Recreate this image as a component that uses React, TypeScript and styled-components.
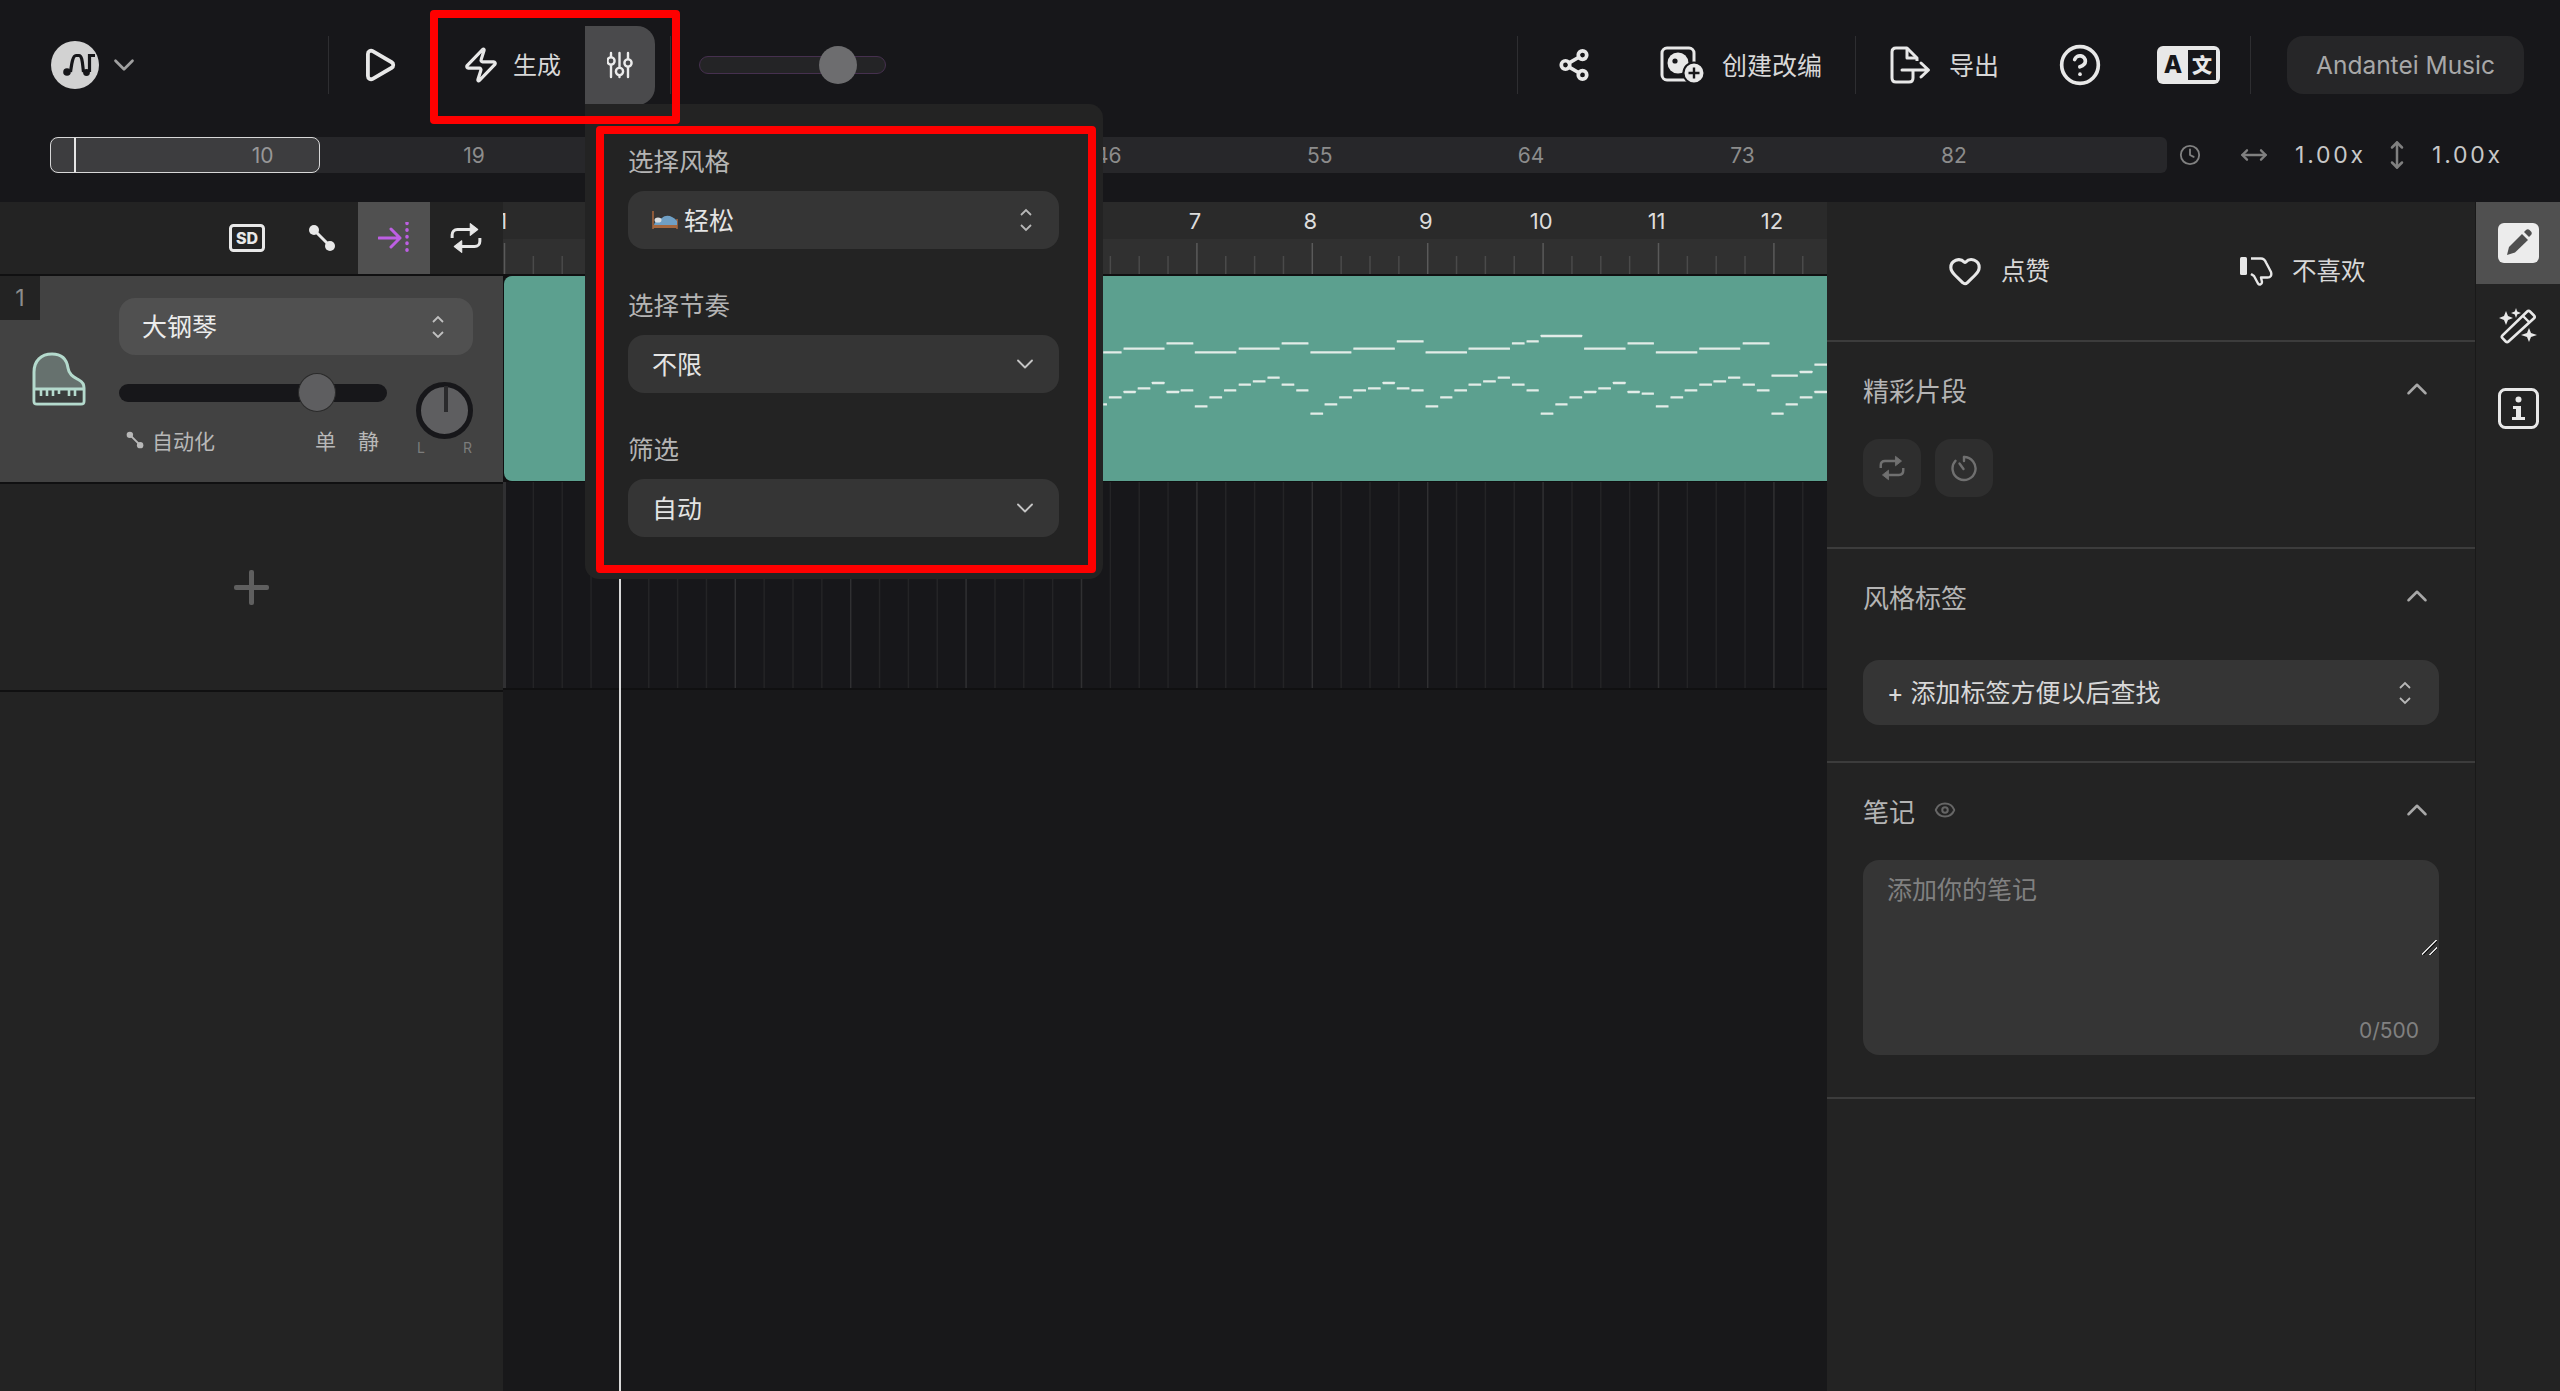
import styled, { createGlobalStyle } from 'styled-components';
import {
  ChevronDown,
  ChevronUp,
  CircleHelp,
  Clock,
  Eye,
  Heart,
  MoveHorizontal,
  MoveVertical,
  Play,
  Share2,
  Zap
} from 'lucide-react';

const GlobalStyle = createGlobalStyle`
  html, body {
    margin: 0;
    padding: 0;
    background: #17171a;
    overflow: hidden;
  }
  * {
    box-sizing: border-box;
  }
  body, textarea {
    font-family: Inter, "Noto Sans CJK SC", sans-serif;
  }
`;

const BAR = 115.4;
const OVERVIEW_NUMBERS = [10, 19, 28, 37, 46, 55, 64, 73, 82];
const BARS = [1, 2, 3, 4, 5, 6, 7, 8, 9, 10, 11, 12];

// start, end, height, measured off the zoomed piano roll
const NOTES = [
  [28, 67, 487], [71, 158, 476], [162, 219, 460], [222, 310, 487], [315, 402, 476], [406, 463, 460],
  [467, 554, 487], [558, 646, 476], [650, 707, 454], [711, 799, 487], [802, 890, 476], [894, 921, 460],
  [925, 951, 454], [955, 1043, 438], [1047, 1135, 476], [1139, 1195, 460], [1199, 1287, 487],
  [1291, 1378, 476], [1383, 1440, 460], [1444, 1500, 557], [1504, 1531, 546], [1535, 1562, 524],
  [28, 36, 643], [40, 67, 622], [71, 97, 606], [101, 128, 595], [131, 158, 579], [162, 189, 606],
  [192, 219, 601], [222, 249, 649], [253, 280, 622], [284, 310, 601], [315, 341, 584], [345, 372, 574],
  [376, 402, 563], [406, 433, 584], [437, 463, 601], [467, 494, 671], [497, 524, 643], [528, 555, 622],
  [558, 585, 601], [589, 616, 595], [620, 646, 579], [650, 677, 595], [681, 707, 601], [711, 738, 649],
  [742, 768, 622], [772, 799, 601], [802, 829, 584], [833, 860, 574], [864, 890, 563], [894, 921, 584],
  [925, 951, 601], [955, 982, 671], [986, 1012, 643], [1016, 1043, 622], [1047, 1073, 606],
  [1077, 1104, 595], [1108, 1135, 579], [1139, 1165, 606], [1169, 1195, 611], [1199, 1226, 649],
  [1230, 1257, 622], [1260, 1287, 601], [1291, 1318, 584], [1321, 1348, 574], [1352, 1378, 563],
  [1383, 1409, 584], [1413, 1440, 601], [1444, 1470, 671], [1474, 1500, 643], [1504, 1531, 622],
  [1535, 1562, 606]
];

const LogoIcon = () => (
  <svg width="48" height="48" viewBox="0 0 48 48">
    <circle cx="24" cy="24" r="24" fill="#d2d2d2" />
    <path
      d="M19.5 31C20.5 24 21.5 14.5 25 14.5H28C31.5 14.5 31.5 24 32.5 31"
      fill="none"
      stroke="#17171a"
      strokeWidth="3.2"
    />
    <path d="M38.5 31V14.5H44" fill="none" stroke="#17171a" strokeWidth="3.2" />
    <circle cx="16" cy="31" r="3.8" fill="#17171a" />
    <circle cx="35.5" cy="31.5" r="3.4" fill="#17171a" />
  </svg>
);

const MixerIcon = () => (
  <svg width="26" height="28" viewBox="0 0 26 28" fill="none" stroke="#ececec" strokeWidth="2.4" strokeLinecap="round">
    <path d="M4 2V26M12.5 2V26M21 2V26" />
    <circle cx="4" cy="10" r="3.6" fill="#4a4a4c" />
    <circle cx="12.5" cy="20.5" r="3.6" fill="#4a4a4c" />
    <circle cx="21" cy="12" r="3.6" fill="#4a4a4c" />
  </svg>
);

const RemixIcon = () => (
  <svg width="46" height="38" viewBox="0 0 46 38">
    <rect x="2" y="2" width="32" height="32" rx="5" fill="none" stroke="#e8e8e8" strokeWidth="3" />
    <circle cx="18" cy="17" r="10.5" fill="#e8e8e8" />
    <circle cx="15" cy="15" r="2.6" fill="#17171a" />
    <circle cx="34" cy="27" r="10.5" fill="#e8e8e8" stroke="#17171a" strokeWidth="2" />
    <path d="M34 21.5V32.5M28.5 27H39.5" stroke="#17171a" strokeWidth="2.4" />
  </svg>
);

const ExportIcon = () => (
  <svg width="42" height="38" viewBox="0 0 42 38" fill="none" stroke="#e8e8e8" strokeWidth="3">
    <path d="M23 25V32C23 34.5 21.5 36 19 36H6C3.5 36 2 34.5 2 32V6C2 3.5 3.5 2 6 2H17L27 12V15" strokeLinejoin="round" />
    <path d="M17 2V12H27" strokeLinejoin="round" />
    <path d="M12 24H38M31 17L38.5 24L31 31" strokeLinecap="round" strokeLinejoin="round" />
  </svg>
);

const TranslateIcon = () => (
  <svg width="63" height="38" viewBox="0 0 63 38">
    <rect width="63" height="38" rx="6" fill="#e8e8e8" />
    <rect x="31" y="4" width="28" height="30" fill="#17171a" />
    <text x="16" y="27" fontSize="24" fontWeight="800" textAnchor="middle" fill="#17171a" fontFamily="Inter">A</text>
    <text x="45" y="27" fontSize="20" fontWeight="800" textAnchor="middle" fill="#e8e8e8" fontFamily="'Noto Sans CJK SC'">文</text>
  </svg>
);

const SdIcon = () => (
  <svg width="36" height="28" viewBox="0 0 36 28">
    <rect x="1.5" y="1.5" width="33" height="25" rx="3" fill="none" stroke="#e8e8e8" strokeWidth="3" />
    <text x="18" y="20" fontSize="16" fontWeight="800" textAnchor="middle" fill="#e8e8e8" fontFamily="Inter">SD</text>
  </svg>
);

const AutomationIcon = ({ size = 28 }: { size?: number }) => (
  <svg width={size} height={size} viewBox="0 0 28 28">
    <path d="M6 6L22 22" stroke="currentColor" strokeWidth="3" />
    <circle cx="6" cy="6" r="5" fill="currentColor" />
    <circle cx="22" cy="22" r="5" fill="currentColor" />
  </svg>
);

const SnapIcon = () => (
  <svg width="32" height="32" viewBox="0 0 32 32" fill="none" stroke="#bd5fe3">
    <path d="M1 16H21M13 7L22 16L13 25" strokeWidth="3" strokeLinecap="round" strokeLinejoin="round" />
    <path d="M29 1V31" strokeWidth="3.5" strokeLinecap="round" strokeDasharray="0.5 6.2" />
  </svg>
);

const LoopIcon = ({ size = 30 }: { size?: number }) => (
  <svg width={size} height={size} viewBox="0 0 30 30" fill="none" stroke="currentColor" strokeWidth="2.8">
    <path d="M2 15V12C2 9 4 7 7 7H21" />
    <path d="M28 15V18C28 21 26 23 23 23H9" />
    <path d="M19 1.5L26 7L19 12.5Z" fill="currentColor" strokeWidth="1" strokeLinejoin="round" />
    <path d="M11 17.5L4 23L11 28.5Z" fill="currentColor" strokeWidth="1" strokeLinejoin="round" />
  </svg>
);

const UpDownIcon = ({ color = '#c0c0c0' }: { color?: string }) => (
  <svg width="12" height="24" viewBox="0 0 12 24" fill="none" stroke={color} strokeWidth="1.8">
    <path d="M1 7L6 2L11 7M1 17L6 22L11 17" />
  </svg>
);

const TimerIcon = () => (
  <svg width="26" height="28" viewBox="0 0 26 28" fill="none" stroke="currentColor" strokeWidth="2.4">
    <path d="M13 3A11.5 11.5 0 1 1 4.5 6.8" strokeLinecap="round" />
    <path d="M13 3V7M8.5 9.5L12.5 15" strokeLinecap="round" />
  </svg>
);

const DislikeIcon = () => (
  <svg width="33" height="29" viewBox="0 0 33 29">
    <rect x="0" y="0" width="7" height="18" rx="1.5" fill="#e8e8e8" />
    <path
      d="M11 1.5H21C24 1.5 25 3 26 5.5L31 15C32 18.5 30.5 20.5 27.5 20.5H21L22 25C22 27.5 19.5 28.5 18 26.5L14 19L11 17"
      fill="none"
      stroke="#e8e8e8"
      strokeWidth="2.4"
      strokeLinejoin="round"
    />
  </svg>
);

const PianoIcon = () => (
  <svg width="54" height="54" viewBox="0 0 54 54" fill="none">
    <path
      d="M2 49V20C2 9 9 2 20 2C31 2 35 9 36 16C37 23 42 25 47 28C51 30 52 32 52 36V49C52 51 51 52 49 52H5C3 52 2 51 2 49Z"
      fill="#66716e"
      stroke="#b4dacd"
      strokeWidth="3"
    />
    <path d="M3.5 38H50.5V50.5H3.5Z" fill="#3a3d3c" />
    <path d="M2 37H52" stroke="#b4dacd" strokeWidth="3" />
    <path d="M9 38V44M15 38V44M21 38V44M27 38V42M37 38V44M43 38V44" stroke="#b4dacd" strokeWidth="2.6" />
  </svg>
);

const BedEmoji = () => (
  <svg width="26" height="20" viewBox="0 0 26 20">
    <path d="M1 1V19M25 9V19" stroke="#8d5a3a" strokeWidth="2" />
    <path d="M1 15H25V18H1Z" fill="#a5683f" />
    <path d="M2 15C3 11 6 9 10 8C14 4 21 6 25 11V15Z" fill="#6f9fc4" />
    <ellipse cx="6" cy="10" rx="3.5" ry="2.6" fill="#d9dde0" />
  </svg>
);

const PencilTabIcon = () => (
  <svg width="41" height="40" viewBox="0 0 41 40">
    <rect width="41" height="40" rx="6" fill="#ececec" />
    <path d="M9 32L11 24L24 11L30 17L17 29.5Z" fill="#4f4f4f" />
    <path d="M26 9L28 7C29 6 30.5 6 31.5 7L33 8.5C34 9.5 34 11 33 12L31 14Z" fill="#4f4f4f" />
  </svg>
);

const WandIcon = () => (
  <svg width="38" height="36" viewBox="0 0 38 36">
    <path
      d="M31 3.5L35 7.5C35.8 8.3 35.8 9.5 35 10.3L9.5 33.5C8.7 34.3 7.5 34.3 6.7 33.5L3.5 30.2C2.7 29.4 2.7 28.2 3.5 27.4L28.2 3.5C29 2.7 30.2 2.7 31 3.5Z"
      fill="none"
      stroke="#e8e8e8"
      strokeWidth="2.6"
    />
    <path d="M24 8L30.5 14.5" stroke="#e8e8e8" strokeWidth="2.4" />
    <path d="M7 3L9 8L14 10L9 12L7 17L5 12L0 10L5 8Z" fill="#e8e8e8" />
    <path d="M17 0L18.2 3.6L22 5L18.2 6.4L17 10L15.8 6.4L12 5L15.8 3.6Z" fill="#e8e8e8" />
    <path d="M30 20L32 25L38 27L32 29L30 34L28 29L22 27L28 25Z" fill="#e8e8e8" />
  </svg>
);

const InfoIcon = () => (
  <svg width="41" height="41" viewBox="0 0 41 41">
    <rect x="1.5" y="1.5" width="38" height="38" rx="6" fill="none" stroke="#e8e8e8" strokeWidth="3" />
    <circle cx="20.5" cy="11.5" r="3" fill="#e8e8e8" />
    <path d="M15 18H23V29H27V32H14V29H18V21H15Z" fill="#e8e8e8" />
  </svg>
);

const RulerTicks = () => (
  <svg width="1324" height="35" viewBox="0 0 1324 35">
    {Array.from({ length: 47 }, (_, i) => (
      <line
        key={i}
        x1={1.5 + (i * BAR) / 4}
        x2={1.5 + (i * BAR) / 4}
        y1={i % 4 === 0 ? 4 : 17}
        y2={35}
        stroke={i % 4 === 0 ? '#5a5a5a' : '#4a4a4a'}
        strokeWidth="1.5"
      />
    ))}
  </svg>
);

const GridLines = () => (
  <svg width="1324" height="206" viewBox="0 0 1324 206">
    {Array.from({ length: 47 }, (_, i) => (
      <line
        key={i}
        x1={1.5 + (i * BAR) / 4}
        x2={1.5 + (i * BAR) / 4}
        y1={0}
        y2={206}
        stroke={i % 4 === 0 ? '#303032' : '#242426'}
        strokeWidth={i === 0 ? 3 : 1.5}
      />
    ))}
  </svg>
);

const PianoRoll = () => (
  <svg width="1323" height="205" viewBox="0 0 1323 205">
    <g transform="translate(586 -86) scale(0.4719 0.3333)">
      {NOTES.map(([start, end, y]) => (
        <rect key={`${start}-${y}`} x={start} y={y - 3.5} width={end - start} height={7} rx={1} fill="#e2ece8" />
      ))}
    </g>
  </svg>
);

const App = () => {
  return (
    <>
      <GlobalStyle />
      <Page>
        <Header>
          <TopBar>
            <LogoGroup>
              <LogoIcon />
              <ChevronDown size={34} color="#a0a0a0" strokeWidth={1.9} />
            </LogoGroup>
            <Divider />
            <PlayButton>
              <Play size={38} color="#e8e8e8" strokeWidth={2.4} />
            </PlayButton>
            <GenerateButton>
              <Zap size={38} color="#e8e8e8" strokeWidth={2} />
              <span>生成</span>
            </GenerateButton>
            <OptionsButton>
              <MixerIcon />
            </OptionsButton>
            <ShortDivider />
            <VolumeTrack>
              <VolumeThumb />
            </VolumeTrack>
            <Actions>
              <Divider />
              <ShareButton>
                <Share2 size={34} color="#e8e8e8" strokeWidth={2.6} />
              </ShareButton>
              <ActionButton>
                <RemixIcon />
                <span>创建改编</span>
              </ActionButton>
              <ActionDivider />
              <ExportButton>
                <ExportIcon />
                <span>导出</span>
              </ExportButton>
              <HelpButton>
                <CircleHelp size={44} color="#e8e8e8" strokeWidth={2} />
              </HelpButton>
              <TranslateButton>
                <TranslateIcon />
              </TranslateButton>
              <Divider />
              <AccountButton>Andantei Music</AccountButton>
            </Actions>
          </TopBar>
          <OverviewRow>
            <Overview>
              {OVERVIEW_NUMBERS.map((n) => (
                <OverviewNumber key={n}>{n}</OverviewNumber>
              ))}
              <OverviewThumb>
                <OverviewMarker />
              </OverviewThumb>
            </Overview>
            <ZoomInfo>
              <Clock size={22} color="#808080" strokeWidth={2} />
              <MoveHorizontal size={28} color="#808080" strokeWidth={2} />
              <ZoomValue>1.00x</ZoomValue>
              <MoveVertical size={30} color="#808080" strokeWidth={2} />
              <ZoomValue>1.00x</ZoomValue>
            </ZoomInfo>
          </OverviewRow>
        </Header>

        <Main>
          <TrackColumn>
            <TrackToolbar>
              <SdButton>
                <SdIcon />
              </SdButton>
              <ToolButton>
                <AutomationIcon />
              </ToolButton>
              <ToolButton $active>
                <SnapIcon />
              </ToolButton>
              <ToolButton>
                <LoopIcon size={32} />
              </ToolButton>
            </TrackToolbar>
            <TrackRow>
              <TrackNumber>1</TrackNumber>
              <PianoSlot>
                <PianoIcon />
              </PianoSlot>
              <TrackControls>
                <InstrumentSelect>
                  <span>大钢琴</span>
                  <UpDownIcon />
                </InstrumentSelect>
                <MixerRow>
                  <MixerLeft>
                    <TrackSlider>
                      <TrackSliderThumb />
                    </TrackSlider>
                    <TrackLabels>
                      <AutomationLabel>
                        <AutomationIcon size={18} />
                        <span>自动化</span>
                      </AutomationLabel>
                      <SoloMute>
                        <span>单</span>
                        <span>静</span>
                      </SoloMute>
                    </TrackLabels>
                  </MixerLeft>
                  <PanColumn>
                    <PanKnob>
                      <PanPointer />
                    </PanKnob>
                    <PanLabels>
                      <span>L</span>
                      <span>R</span>
                    </PanLabels>
                  </PanColumn>
                </MixerRow>
              </TrackControls>
            </TrackRow>
            <AddTrackRow>
              <AddTrackPlus />
            </AddTrackRow>
          </TrackColumn>

          <TimelineColumn>
            <Ruler>
              <RulerNumbers>
                {BARS.map((n) => (
                  <RulerNumber key={n}>{n}</RulerNumber>
                ))}
              </RulerNumbers>
              <RulerTickRow>
                <RulerTicks />
              </RulerTickRow>
            </Ruler>
            <ClipLane>
              <Clip>
                <PianoRoll />
              </Clip>
            </ClipLane>
            <GridLane>
              <GridLines />
            </GridLane>
            <Playhead />
          </TimelineColumn>

          <DetailPanel>
            <LikeRow>
              <LikeButton>
                <Heart size={34} color="#e8e8e8" strokeWidth={2.2} />
                <span>点赞</span>
              </LikeButton>
              <LikeButton>
                <DislikeIcon />
                <span>不喜欢</span>
              </LikeButton>
            </LikeRow>

            <Section $pb={50}>
              <SectionHeader $mb={33}>
                <SectionTitle>精彩片段</SectionTitle>
                <ChevronUp size={34} color="#a8a8a8" strokeWidth={1.8} />
              </SectionHeader>
              <HighlightButtons>
                <HighlightButton>
                  <LoopIcon size={26} />
                </HighlightButton>
                <HighlightButton>
                  <TimerIcon />
                </HighlightButton>
              </HighlightButtons>
            </Section>

            <Section $pb={36}>
              <SectionHeader $mb={47}>
                <SectionTitle>风格标签</SectionTitle>
                <ChevronUp size={34} color="#a8a8a8" strokeWidth={1.8} />
              </SectionHeader>
              <TagSelect>
                <span>+ 添加标签方便以后查找</span>
                <UpDownIcon color="#b8b8b8" />
              </TagSelect>
            </Section>

            <Section $pb={42}>
              <SectionHeader $mb={33}>
                <NoteTitle>
                  <SectionTitle>笔记</SectionTitle>
                  <Eye size={22} color="#666" strokeWidth={2.2} />
                </NoteTitle>
                <ChevronUp size={34} color="#a8a8a8" strokeWidth={1.8} />
              </SectionHeader>
              <NoteBox>
                <NoteInput placeholder="添加你的笔记" />
                <NoteCount>0/500</NoteCount>
              </NoteBox>
            </Section>
          </DetailPanel>

          <TabRail>
            <RailTab $active>
              <PencilTabIcon />
            </RailTab>
            <RailTab>
              <WandIcon />
            </RailTab>
            <RailTab>
              <InfoIcon />
            </RailTab>
          </TabRail>
        </Main>

        <Popover>
          <Field>
            <FieldLabel>选择风格</FieldLabel>
            <FieldSelect $paddingRight={27}>
              <FieldValue>
                <BedEmoji />
                <span>轻松</span>
              </FieldValue>
              <UpDownIcon color="#b8b8b8" />
            </FieldSelect>
          </Field>
          <Field>
            <FieldLabel>选择节奏</FieldLabel>
            <FieldSelect $paddingRight={20}>
              <FieldValue>
                <span>不限</span>
              </FieldValue>
              <ChevronDown size={28} color="#c4c4c4" strokeWidth={1.6} />
            </FieldSelect>
          </Field>
          <Field>
            <FieldLabel>筛选</FieldLabel>
            <FieldSelect $paddingRight={20}>
              <FieldValue>
                <span>自动</span>
              </FieldValue>
              <ChevronDown size={28} color="#c4c4c4" strokeWidth={1.6} />
            </FieldSelect>
          </Field>
        </Popover>

        <GenerateHighlight />
        <PopoverHighlight />
      </Page>
    </>
  );
};

export default App;

const Page = styled.div`
  position: relative;
  width: 2560px;
  height: 1391px;
  overflow: hidden;
  display: flex;
  flex-direction: column;
  background: #17171a;
`;

const Header = styled.header`
  height: 202px;
  flex-shrink: 0;
  display: flex;
  flex-direction: column;
`;

const TopBar = styled.div`
  height: 130px;
  display: flex;
  align-items: center;
  padding: 0 36px 0 50px;
`;

const LogoGroup = styled.div`
  width: 278px;
  padding-left: 1px;
  display: flex;
  align-items: center;
  gap: 8px;
`;

const Divider = styled.div`
  width: 1px;
  height: 58px;
  background: #2e2e31;
`;

const PlayButton = styled.div`
  margin-left: 27px;
  width: 46px;
  display: flex;
  justify-content: center;
`;

const GenerateButton = styled.div`
  margin-left: 60px;
  width: 123px;
  display: flex;
  align-items: center;
  gap: 13px;
  font-size: 24px;
  color: #d8d8d8;
  span {
    margin-bottom: 3px;
  }
`;

const OptionsButton = styled.div`
  width: 70px;
  height: 79px;
  display: flex;
  align-items: center;
  justify-content: center;
  background: #4a4a4c;
  border-radius: 0 18px 18px 0;
`;

const ShortDivider = styled(Divider)`
  margin-left: 15px;
`;

const VolumeTrack = styled.div`
  position: relative;
  margin-left: 28px;
  width: 187px;
  height: 18px;
  background: #242426;
  border: 1px solid #46304f;
  border-radius: 9px;
`;

const VolumeThumb = styled.div`
  position: absolute;
  left: 119px;
  top: -11px;
  width: 38px;
  height: 38px;
  border-radius: 50%;
  background: #6d6d6f;
`;

const Actions = styled.div`
  margin-left: auto;
  display: flex;
  align-items: center;
`;

const ShareButton = styled.div`
  margin-left: 39px;
  width: 34px;
  display: flex;
`;

const ActionButton = styled.div`
  margin-left: 69px;
  display: flex;
  align-items: center;
  gap: 16px;
  font-size: 25px;
  color: #d8d8d8;
  white-space: nowrap;
  span {
    margin-bottom: 3px;
  }
`;

const ActionDivider = styled(Divider)`
  margin-left: 33px;
`;

const ExportButton = styled(ActionButton)`
  margin-left: 34px;
  gap: 17px;
`;

const HelpButton = styled.div`
  margin-left: 59px;
  display: flex;
`;

const TranslateButton = styled.div`
  margin-left: 55px;
  margin-right: 30px;
  display: flex;
`;

const AccountButton = styled.div`
  margin-left: 36px;
  width: 237px;
  height: 58px;
  display: flex;
  align-items: center;
  justify-content: center;
  background: #262628;
  border-radius: 16px;
  font-size: 24.5px;
  color: #a8a8a8;
`;

const OverviewRow = styled.div`
  margin-top: 7px;
  height: 36px;
  display: flex;
  align-items: center;
  padding-left: 50px;
`;

const Overview = styled.div`
  position: relative;
  width: 2117px;
  height: 36px;
  padding-left: 107px;
  display: flex;
  align-items: center;
  background: #27272a;
  border-radius: 6px;
`;

const OverviewNumber = styled.div`
  width: 211.4px;
  flex-shrink: 0;
  text-align: center;
  font-size: 21px;
  color: #8c8c8c;
`;

const OverviewThumb = styled.div`
  position: absolute;
  left: 0;
  top: 0;
  width: 270px;
  height: 36px;
  border: 1.5px solid #d8d8d8;
  border-radius: 8px;
  background: rgba(255, 255, 255, 0.1);
`;

const OverviewMarker = styled.div`
  position: absolute;
  left: 23px;
  top: 0;
  bottom: 0;
  width: 2px;
  background: #e6e6e6;
`;

const ZoomInfo = styled.div`
  margin-left: 12px;
  display: flex;
  align-items: center;
  svg:nth-child(2) {
    margin-left: 39px;
  }
  span:nth-child(3) {
    margin-left: 27px;
  }
  svg:nth-child(4) {
    margin-left: 16px;
  }
  span:nth-child(5) {
    margin-left: 20px;
  }
`;

const ZoomValue = styled.span`
  font-size: 23px;
  letter-spacing: 2.8px;
  color: #c8c8c8;
  white-space: nowrap;
`;

const Main = styled.main`
  flex: 1;
  display: flex;
  min-height: 0;
`;

const TrackColumn = styled.section`
  width: 503px;
  flex-shrink: 0;
  display: flex;
  flex-direction: column;
  background: #232323;
`;

const TrackToolbar = styled.div`
  height: 74px;
  flex-shrink: 0;
  display: flex;
  justify-content: flex-end;
  padding-right: 1px;
  border-bottom: 2px solid #101011;
`;

const ToolButton = styled.div<{ $active?: boolean }>`
  width: 72px;
  display: flex;
  align-items: center;
  justify-content: center;
  color: #e8e8e8;
  background: ${({ $active }) => ($active ? '#505050' : 'transparent')};
`;

const SdButton = styled(ToolButton)`
  padding-right: 6px;
`;

const TrackRow = styled.div`
  position: relative;
  height: 208px;
  flex-shrink: 0;
  display: flex;
  padding-top: 22px;
  background: #424242;
  border-bottom: 2px solid #101011;
`;

const TrackNumber = styled.div`
  position: absolute;
  left: 0;
  top: 0;
  width: 40px;
  height: 44px;
  display: flex;
  align-items: center;
  justify-content: center;
  background: #232323;
  font-size: 23px;
  color: #8c8c8c;
`;

const PianoSlot = styled.div`
  width: 119px;
  padding: 54px 0 0 32px;
`;

const TrackControls = styled.div`
  width: 354px;
  display: flex;
  flex-direction: column;
`;

const InstrumentSelect = styled.div`
  height: 57px;
  display: flex;
  align-items: center;
  justify-content: space-between;
  padding: 0 29px 0 23px;
  background: #505050;
  border-radius: 16px;
  font-size: 25px;
  color: #ececec;
  span {
    margin-bottom: 3px;
  }
`;

const MixerRow = styled.div`
  margin-top: 27px;
  display: flex;
  justify-content: space-between;
`;

const MixerLeft = styled.div`
  width: 268px;
  padding-top: 2px;
`;

const TrackSlider = styled.div`
  position: relative;
  height: 18px;
  background: #17171a;
  border-radius: 9px;
`;

const TrackSliderThumb = styled.div`
  position: absolute;
  left: 179px;
  top: -11px;
  width: 38px;
  height: 39px;
  border-radius: 50%;
  background: #5e5e60;
  border: 1px solid #2a2a2a;
`;

const TrackLabels = styled.div`
  margin-top: 23px;
  display: flex;
  align-items: center;
  justify-content: space-between;
  font-size: 21px;
  color: #b8b8b8;
`;

const AutomationLabel = styled.div`
  margin-left: 7px;
  display: flex;
  align-items: center;
  gap: 8px;
`;

const SoloMute = styled.div`
  margin-right: 8px;
  display: flex;
  gap: 22px;
`;

const PanColumn = styled.div`
  width: 57px;
`;

const PanKnob = styled.div`
  position: relative;
  width: 57px;
  height: 57px;
  border-radius: 50%;
  background: #5e5e60;
  border: 5px solid #17171a;
`;

const PanPointer = styled.div`
  position: absolute;
  left: 23px;
  top: -1px;
  width: 4px;
  height: 26px;
  background: #2a2a2c;
`;

const PanLabels = styled.div`
  display: flex;
  justify-content: space-between;
  padding: 0 1px;
  font-size: 14px;
  color: #7c7c7c;
`;

const AddTrackRow = styled.div`
  height: 208px;
  flex-shrink: 0;
  display: flex;
  align-items: center;
  justify-content: center;
  border-bottom: 2px solid #101011;
`;

const AddTrackPlus = styled.div`
  position: relative;
  width: 35px;
  height: 35px;
  &::before,
  &::after {
    content: '';
    position: absolute;
    background: #5f5f5f;
    border-radius: 2px;
  }
  &::before {
    left: 0;
    right: 0;
    top: 15px;
    height: 5px;
  }
  &::after {
    top: 0;
    bottom: 0;
    left: 15px;
    width: 5px;
  }
`;

const TimelineColumn = styled.section`
  position: relative;
  width: 1324px;
  flex-shrink: 0;
  display: flex;
  flex-direction: column;
  background: #18181a;
  overflow: hidden;
`;

const Ruler = styled.div`
  height: 72px;
  flex-shrink: 0;
  display: flex;
  flex-direction: column;
`;

const RulerNumbers = styled.div`
  height: 37px;
  display: flex;
  align-items: center;
  margin-left: -58px;
  background: #2a2a2a;
`;

const RulerNumber = styled.div`
  width: ${BAR}px;
  flex-shrink: 0;
  text-align: center;
  font-size: 22px;
  color: #dcdcdc;
`;

const RulerTickRow = styled.div`
  height: 35px;
  display: flex;
  background: #303030;
`;

const ClipLane = styled.div`
  height: 208px;
  flex-shrink: 0;
  padding: 2px 0 1px 1px;
  background: #101011;
`;

const Clip = styled.div`
  height: 205px;
  background: #5ca08f;
  border-radius: 8px 0 0 8px;
  overflow: hidden;
`;

const GridLane = styled.div`
  height: 208px;
  flex-shrink: 0;
  display: flex;
  background: #17171a;
  border-bottom: 2px solid #101011;
`;

const Playhead = styled.div`
  position: absolute;
  left: 116px;
  top: 0;
  bottom: 0;
  width: 2px;
  background: #d8d8d8;
`;

const DetailPanel = styled.section`
  width: 648px;
  flex-shrink: 0;
  background: #232323;
  display: flex;
  flex-direction: column;
`;

const LikeRow = styled.div`
  height: 140px;
  flex-shrink: 0;
  display: grid;
  grid-template-columns: 292px 200px;
  align-items: center;
  padding-left: 121px;
  border-bottom: 2px solid #3c3c3c;
`;

const LikeButton = styled.div`
  display: flex;
  align-items: center;
  gap: 19px;
  font-size: 24.5px;
  color: #d8d8d8;
  white-space: nowrap;
  span {
    margin-bottom: 3px;
  }
`;

const Section = styled.div<{ $pb: number }>`
  flex-shrink: 0;
  padding: 30px 36px ${({ $pb }) => $pb}px;
  border-bottom: 2px solid #3c3c3c;
`;

const SectionHeader = styled.div<{ $mb: number }>`
  height: 34px;
  margin-bottom: ${({ $mb }) => $mb}px;
  padding-right: 5px;
  display: flex;
  align-items: center;
  justify-content: space-between;
`;

const SectionTitle = styled.div`
  font-size: 26px;
  color: #b4b4b4;
`;

const NoteTitle = styled.div`
  display: flex;
  align-items: center;
  gap: 19px;
`;

const HighlightButtons = styled.div`
  display: flex;
  gap: 14px;
`;

const HighlightButton = styled.div`
  width: 58px;
  height: 58px;
  display: flex;
  align-items: center;
  justify-content: center;
  background: #2e2e2e;
  border-radius: 16px;
  color: #707070;
`;

const TagSelect = styled.div`
  height: 65px;
  display: flex;
  align-items: center;
  justify-content: space-between;
  padding: 0 28px 0 24px;
  background: #353535;
  border-radius: 16px;
  font-size: 25px;
  color: #d8d8d8;
  span {
    margin-bottom: 3px;
  }
`;

const NoteBox = styled.div`
  position: relative;
  height: 195px;
  background: #353535;
  border-radius: 16px;
`;

const NoteInput = styled.textarea`
  display: block;
  width: 574px;
  height: 95px;
  padding: 13px 24px 0;
  background: transparent;
  border: none;
  outline: none;
  color: #d8d8d8;
  font-size: 25px;
  line-height: 34px;
  &::placeholder {
    color: #808080;
  }
  &::-webkit-resizer {
    background: linear-gradient(
      135deg,
      transparent 0 46%,
      #d8d8d8 46% 52%,
      #1a1a1a 52% 58%,
      transparent 58% 72%,
      #d8d8d8 72% 77%,
      #1a1a1a 77% 83%,
      transparent 83%
    );
  }
`;

const NoteCount = styled.div`
  position: absolute;
  right: 20px;
  bottom: 12px;
  font-size: 21px;
  color: #808080;
`;

const TabRail = styled.aside`
  flex: 1;
  display: flex;
  flex-direction: column;
  background: #232323;
  border-left: 1px solid #191919;
`;

const RailTab = styled.div<{ $active?: boolean }>`
  height: ${({ $active }) => ($active ? 82 : 83)}px;
  display: flex;
  align-items: center;
  justify-content: center;
  background: ${({ $active }) => ($active ? '#505050' : 'transparent')};
`;

const Popover = styled.div`
  position: absolute;
  left: 585px;
  top: 104px;
  width: 518px;
  height: 475px;
  padding: 40px 44px 0 43px;
  background: #232323;
  border-radius: 0 14px 14px 14px;
`;

const Field = styled.div`
  margin-bottom: 39px;
`;

const FieldLabel = styled.div`
  height: 36px;
  margin-bottom: 11px;
  padding-bottom: 5px;
  display: flex;
  align-items: center;
  font-size: 25.5px;
  color: #b4b4b4;
`;

const FieldSelect = styled.div<{ $paddingRight: number }>`
  height: 58px;
  display: flex;
  align-items: center;
  justify-content: space-between;
  padding: 0 ${({ $paddingRight }) => $paddingRight}px 0 24px;
  background: #353535;
  border-radius: 16px;
  color: #e4e4e4;
`;

const FieldValue = styled.div`
  display: flex;
  align-items: center;
  gap: 6px;
  font-size: 25px;
  span {
    margin-bottom: 3px;
  }
`;

const GenerateHighlight = styled.div`
  position: absolute;
  left: 430px;
  top: 10px;
  width: 250px;
  height: 114px;
  border: 8px solid #ff0000;
  border-radius: 4px;
`;

const PopoverHighlight = styled.div`
  position: absolute;
  left: 596px;
  top: 126px;
  width: 500px;
  height: 447px;
  border: 8px solid #ff0000;
  border-radius: 4px;
`;
